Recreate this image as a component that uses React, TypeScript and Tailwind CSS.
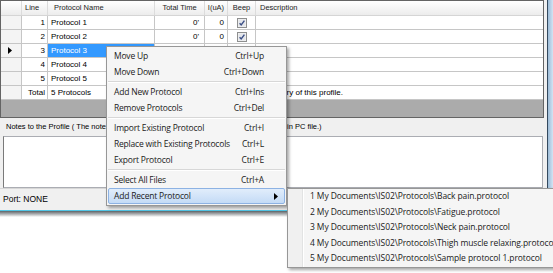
import React from "react";

const COLS = "grid-cols-[21px_26px_107px_50px_23px_28px_1fr]";

const ROWS = [1, 2, 3, 4, 5];

type Item = { label: string; keys?: string; sub?: boolean; active?: boolean } | "sep";

const MENU: Item[] = [
  { label: "Move Up", keys: "Ctrl+Up" },
  { label: "Move Down", keys: "Ctrl+Down" },
  "sep",
  { label: "Add New Protocol", keys: "Ctrl+Ins" },
  { label: "Remove Protocols", keys: "Ctrl+Del" },
  "sep",
  { label: "Import Existing Protocol", keys: "Ctrl+I" },
  { label: "Replace with Existing Protocols", keys: "Ctrl+L" },
  { label: "Export Protocol", keys: "Ctrl+E" },
  "sep",
  { label: "Select All Files", keys: "Ctrl+A" },
  { label: "Add Recent Protocol", sub: true, active: true },
];

const RECENT = [
  "1 My Documents\\IS02\\Protocols\\Back pain.protocol",
  "2 My Documents\\IS02\\Protocols\\Fatigue.protocol",
  "3 My Documents\\IS02\\Protocols\\Neck pain.protocol",
  "4 My Documents\\IS02\\Protocols\\Thigh muscle relaxing.protocol",
  "5 My Documents\\IS02\\Protocols\\Sample protocol 1.protocol",
];

function Check() {
  return (
    <svg width="10" height="10" viewBox="0 0 10 10" aria-hidden>
      <rect x="0.5" y="0.5" width="9" height="9" fill="#f4f4f4" stroke="#8e8f8f" />
      <rect x="1.5" y="1.5" width="7" height="7" fill="#e4e6ea" />
      <path d="M2.6 5.2 L4.2 7 L7.4 2.6" fill="none" stroke="#3b4f86" strokeWidth="1.4" />
    </svg>
  );
}

function Arrow() {
  return (
    <svg width="4" height="7" viewBox="0 0 4 7" aria-hidden>
      <polygon points="0,0 4,3.5 0,7" fill="#000" />
    </svg>
  );
}

function Header() {
  return (
    <div
      className={`grid h-[15px] ${COLS} border-b border-[#d5d5d5] bg-gradient-to-b from-white to-[#ececec] text-[7.5px] leading-[14px] text-[#1e1e1e]`}
    >
      <div className="border-r border-[#dcdcdc]" />
      <div className="border-r border-[#dcdcdc] pl-[3px]">Line</div>
      <div className="border-r border-[#dcdcdc] pl-[6px]">Protocol Name</div>
      <div className="border-r border-[#dcdcdc] text-center">Total Time</div>
      <div className="border-r border-[#dcdcdc] text-center">I(uA)</div>
      <div className="border-r border-[#dcdcdc] text-center">Beep</div>
      <div className="pl-[4px]">Description</div>
    </div>
  );
}

function Row({ n }: { n: number }) {
  const sel = n === 3;
  return (
    <div className={`grid h-[14px] ${COLS} border-b border-[#c6c6c6] bg-white text-[8px] leading-[13px] text-black`}>
      <div className="flex items-center border-r border-[#c6c6c6] bg-[#f4f4f4] pl-[7px]">
        {sel && <Arrow />}
      </div>
      <div className="border-r border-[#c6c6c6] pr-[2px] text-right">{n}</div>
      <div className={`border-r border-[#c6c6c6] pl-[3px] ${sel ? "bg-[#3399ff] text-white" : ""}`}>
        Protocol {n}
      </div>
      <div className="border-r border-[#c6c6c6] pr-[5px] text-right">0'</div>
      <div className="border-r border-[#c6c6c6] pr-[3px] text-right">0</div>
      <div className="flex items-center justify-center border-r border-[#c6c6c6]">
        <Check />
      </div>
      <div />
    </div>
  );
}

function TotalRow() {
  return (
    <div className={`grid h-[14px] ${COLS} border-b border-[#c6c6c6] bg-white text-[8px] leading-[13px] text-black`}>
      <div className="border-r border-[#c6c6c6] bg-[#f4f4f4]" />
      <div className="border-r border-[#c6c6c6] pr-[2px] text-right">Total</div>
      <div className="border-r border-[#c6c6c6] pl-[3px]">5 Protocols</div>
      <div className="border-r border-[#c6c6c6]" />
      <div className="border-r border-[#c6c6c6]" />
      <div className="border-r border-[#c6c6c6]" />
      <div className="pl-[3px]">Summary of this profile.</div>
    </div>
  );
}

function ContextMenu() {
  return (
    <div className="absolute left-[106px] top-[46px] w-[181px] border border-[#979797] bg-[#f5f5f5] py-[1px] text-[8.5px] tracking-[-0.2px] text-[#1a1a1a] shadow-[2px_2px_3px_rgba(0,0,0,0.35)] [font-family:'Open_Sans',sans-serif]">
      {MENU.map((it, i) =>
        it === "sep" ? (
          <div key={i} className="mx-[1px] flex h-[4px] flex-col justify-center">
            <div className="h-px bg-[#d7d7d7]" />
            <div className="h-px bg-white" />
          </div>
        ) : it.active ? (
          <div
            key={i}
            className="mx-[1px] flex h-[16px] items-center rounded-[2px] border border-[#8db2e3] bg-gradient-to-b from-[#e1edfb] to-[#c4dbf6] pl-[5px] pr-[6px]"
          >
            <span className="flex-1">{it.label}</span>
            <Arrow />
          </div>
        ) : (
          <div key={i} className="mx-[1px] flex h-[16px] items-center pl-[6px] pr-[21px]">
            <span className="flex-1">{it.label}</span>
            <span>{it.keys}</span>
          </div>
        )
      )}
    </div>
  );
}

function RecentMenu() {
  return (
    <div className="absolute left-[287px] top-[188px] w-[280px] border border-[#979797] bg-[#f5f5f5] text-[8.5px] tracking-[-0.1px] text-[#1a1a1a] shadow-[2px_2px_3px_rgba(0,0,0,0.35)] [font-family:'Open_Sans',sans-serif]">
      {RECENT.map((r) => (
        <div key={r} className="flex h-[15.5px] items-stretch">
          <div className="w-[15px] border-r border-[#e2e3e3] bg-[#f0f0f0]" />
          <div className="flex items-center border-l border-white pl-[6px] whitespace-nowrap">{r}</div>
        </div>
      ))}
    </div>
  );
}

export default function App() {
  return (
    <div className="relative h-[273px] w-[553px] overflow-hidden bg-white [font-family:'Liberation_Sans',Arial,sans-serif]">
      <div className="flex h-[210px]">
        <div className="flex w-[547px] flex-col bg-[#f0f0f0]">
          <div className="flex h-[118px] w-[544px] flex-col border border-[#646464] bg-[#ababab]">
            <Header />
            {ROWS.map((n) => (
              <Row key={n} n={n} />
            ))}
            <TotalRow />
          </div>
          <div className="flex h-[18px] items-center pl-[6px] text-[7.5px] text-black">
            Notes to the Profile ( The notes will be stored together with this profile's data file, not in PC file.)
          </div>
          <div className="mx-[3px] h-[52px] w-[540px] border border-[#abadb3] border-l-[#7a7a7a] bg-white" />
          <div className="flex h-[22px] items-center border-t border-[#d7d7d7] pl-[3px] text-[8.5px] text-black">
            Port: NONE
          </div>
        </div>
        <div className="w-[6px] border-l border-[#34495e] bg-gradient-to-r from-[#9dbcd8] to-[#d3e4f3]" />
      </div>
      <div className="h-px bg-[#52c6e6]" />
      <div className="h-[6px] bg-gradient-to-b from-[#5e6468] to-white" />
      <ContextMenu />
      <RecentMenu />
    </div>
  );
}
